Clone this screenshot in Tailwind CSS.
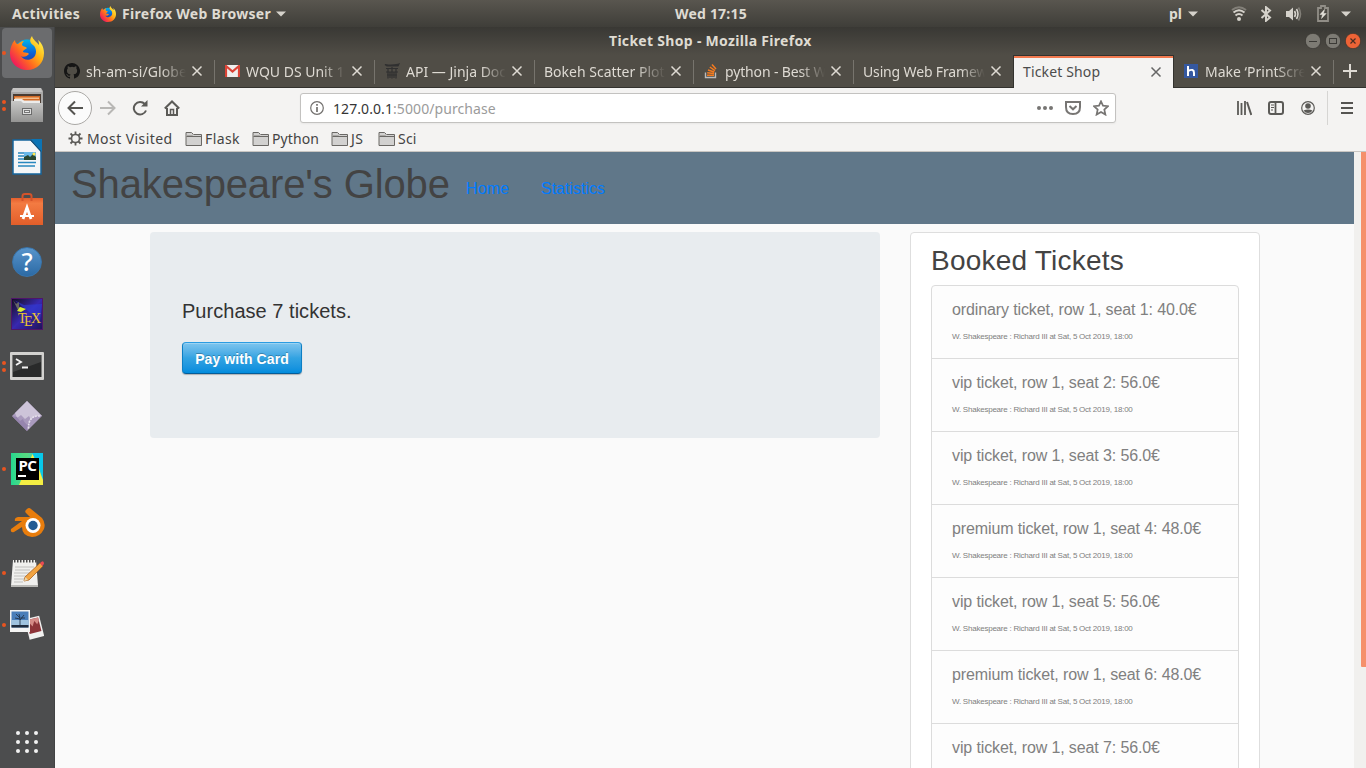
<!DOCTYPE html>
<html lang="en">
<head>
<meta charset="utf-8">
<title>Ticket Shop</title>
<script src="https://cdn.jsdelivr.net/npm/@tailwindcss/browser@4"></script>
</head>
<body class="w-[1366px] h-[768px] overflow-hidden flex flex-col bg-[#fafafa] font-['Noto_Sans',sans-serif] text-[14px]">
<svg class="absolute size-0">
  <defs>
    <linearGradient id="ffb" x1="0" y1="0" x2="0" y2="1"><stop offset="0" stop-color="#00b4ec"/><stop offset=".5" stop-color="#0a63d8"/><stop offset="1" stop-color="#332a8c"/></linearGradient>
    <linearGradient id="ffo" x1=".9" y1=".1" x2=".1" y2=".8"><stop offset="0" stop-color="#fff14a"/><stop offset=".35" stop-color="#ffb515"/><stop offset=".65" stop-color="#ff6a1f"/><stop offset="1" stop-color="#f01a5c"/></linearGradient>
    <symbol id="firefox" viewBox="0 0 34 34">
      <circle cx="17" cy="17" r="13.500" fill="url(#ffb)"/>
      <path d="M22 0C19 4 20 7 23 9C27 12 27 19 23 22C19 25 13 24 11 20C14 22 17 20 19 18C18 16 15 17 13 16C13 14 16 13 17 12C15 10 13 11 12 9C12 7 13 6 14 5C11 5 9 7 8 8C6 8 5 6 5 4C2 7 0 12 0 18C0 27 8 34 17 34C27 34 34 27 34 17C34 11 31 6 28 4C29 6 29 8 29 9C27 6 23 4 22 0Z" fill="url(#ffo)"/>
    </symbol>
    <symbol id="folder" viewBox="0 0 18 16"><path d="M1 14.5V1.5H6.5L8.5 3.5H16.500V14.500Z" fill="#d2d1d0" stroke="#6a6865"/><path d="M1.500 5.500H16.500" stroke="#6a6865"/><path d="M1.500 4.500H7L8.500 3.500" fill="none" stroke="#aaa8a5"/></symbol>
    <symbol id="close" viewBox="0 0 12 12"><path d="M1.500 1.500L10.500 10.500M10.500 1.500L1.500 10.500" stroke="currentColor" stroke-width="1.500"/></symbol>
    <symbol id="down" viewBox="0 0 10 6"><path d="M0 .5H10L5 5.500Z" fill="#d5d2cb"/></symbol>
  </defs>
</svg>

<!-- System panel -->
<header class="h-[27px] shrink-0 flex items-center bg-linear-to-b from-[#59564f] to-[#3f3e39] text-[#dfdbd2] font-bold pl-3 pr-[15px]">
  <span class="w-[88px] tracking-[0.3px] whitespace-nowrap">Activities</span>
  <svg class="size-[16px]"><use href="#firefox"/></svg>
  <span class="ml-[6px] w-[149px] tracking-[0.3px] whitespace-nowrap">Firefox Web Browser</span>
  <svg class="ml-[5px] w-[10px] h-[6px]"><use href="#down"/></svg>
  <span class="ml-[389px] w-[74px] tracking-[0.2px] whitespace-nowrap">Wed 17:15</span>
  <span class="ml-auto w-[19px]">pl</span>
  <svg class="w-[10px] h-[6px]"><use href="#down"/></svg>
  <svg class="ml-[33px] w-[16px] h-[16px]" viewBox="0 0 16 16" fill="none" stroke-width="2"><circle cx="8" cy="13" r="2" fill="#d5d2cb"/><path d="M4.500 9.500Q8 6.500 11.500 9.500" stroke="#d5d2cb"/><path d="M2.500 6.500Q8 2 13.500 6.500" stroke="#d5d2cb"/><path d="M1 4Q8-1.500 15 4" stroke="#827f78"/></svg>
  <svg class="ml-[12px] w-[14px] h-[16px]" viewBox="0 0 14 16" fill="none" stroke="#d5d2cb" stroke-width="2"><path d="M2.500 4L11 11.500L7 14.800V1.200L11 4.500L2.500 12"/></svg>
  <svg class="ml-[12px] w-[17px] h-[16px]" viewBox="0 0 17 16"><path d="M1 5H4L8 1.500V14.500L4 11H1Z" fill="#d5d2cb"/><path d="M9.500 5Q11.500 8 9.500 11M11.500 3Q14.500 8 11.500 13" stroke="#d5d2cb" stroke-width="1.600" fill="none"/><path d="M13.500 1.500Q17.500 8 13.500 14.500" stroke="#827f78" stroke-width="1.600" fill="none"/></svg>
  <svg class="ml-[15px] w-[12px] h-[17px]" viewBox="0 0 12 17"><path d="M1 3H4V1H8V3H11V16H1Z" fill="none" stroke="#918e87" stroke-width="1.800"/><path d="M7.500 4.500L3 9.500H5.500L4.500 13.500L9.200 8.500H6.500Z" fill="#e5e2da" stroke="#e5e2da" stroke-width=".5"/></svg>
  <svg class="ml-[12px] w-[10px] h-[6px]"><use href="#down"/></svg>
</header>

<div class="flex-1 flex min-h-0">
  <!-- Dock -->
  <aside class="w-[55px] shrink-0 bg-[#4c4d4e] border-r border-[#424344] flex flex-col">
    <div class="h-[52px] shrink-0 relative flex items-center justify-center"><div class="absolute left-[2px] top-[1px] size-[50px] rounded-[4px] bg-[#6b6c6e]"></div><i class="absolute left-[2px] top-[24px] size-[4px] rounded-full bg-[#e95420]"></i><svg class="relative size-[34px]"><use href="#firefox"/></svg></div>
    <div class="h-[52px] shrink-0 relative flex items-center justify-center"><i class="absolute left-[2px] top-[21px] size-[4px] rounded-full bg-[#e95420]"></i><i class="absolute left-[2px] top-[28px] size-[4px] rounded-full bg-[#e95420]"></i>
      <svg class="w-[32px] h-[34px]" viewBox="1 0 32 34"><linearGradient id="cab" x1="0" y1="0" x2="0" y2="1"><stop offset="0" stop-color="#c8c8c7"/><stop offset="1" stop-color="#949493"/></linearGradient><path d="M3 0H31L33 3V34H1V3Z" fill="#aaa9a8"/><path d="M3 0H31L32 4H2Z" fill="#c4c3c2"/><rect x="3" y="6" width="28" height="9" fill="#4b3c32"/><path d="M4 8H30V13H4Z" fill="#d46a25"/><path d="M5 9.500H29V11H5Z" fill="#f3bd8a"/><path d="M4 11H12L14 12.500H30V15H4Z" fill="#ececeb"/><path d="M1 13H11L13 15H33V34H1Z" fill="url(#cab)"/><rect x="12.500" y="20.500" width="9" height="6" fill="#ddd" stroke="#6b6b6b"/><rect x="14.500" y="22.500" width="5" height="2" fill="#e8e8e8" stroke="#777"/></svg></div>
    <div class="h-[52px] shrink-0 flex items-center justify-center">
      <svg class="w-[30px] h-[36px]" viewBox="0 0 30 36"><path d="M1 1H19L29 12V35H1Z" fill="#f5f6f7" stroke="#16659d" stroke-width="1.500"/><path d="M19 0H30V13Z" fill="#0b74b5"/><path d="M18 1L29 13V12L19 1Z" fill="#13466c"/><path d="M6 14H12M6 17H12M6 20H12M6 23.500H24M6 27H23" stroke="#2888bf" stroke-width="1.500"/><rect x="12" y="13" width="12" height="8" fill="#69b8e8"/><path d="M12 21V18L16 16L18 18L21 15L24 18V21Z" fill="#29472f"/><circle cx="22" cy="15" r="1.500" fill="#ffe94f"/></svg></div>
    <div class="h-[52px] shrink-0 flex items-center justify-center">
      <svg class="w-[32px] h-[34px]" viewBox="0 0 32 34"><linearGradient id="bag" x1="0" y1="0" x2="0" y2="1"><stop offset="0" stop-color="#e45f2d"/><stop offset=".2" stop-color="#f37b42"/><stop offset="1" stop-color="#e25e2a"/></linearGradient><path d="M0 6H32V33H0Z" fill="url(#bag)"/><path d="M11.500 9V4Q11.500 2 14 2H18Q20.500 2 20.500 4V9" fill="none" stroke="#d4532a" stroke-width="2"/><path d="M12 27L16 15.500L20 27" fill="none" stroke="#fff" stroke-width="2.800"/><path d="M9 24H23" stroke="#fff" stroke-width="2"/></svg></div>
    <div class="h-[52px] shrink-0 flex items-center justify-center pt-px"><div class="size-[30px] rounded-full bg-linear-to-b from-[#5794cb] to-[#2c6aa5] border border-[#3975ac] flex items-center justify-center text-white font-medium text-[25px] leading-none">?</div></div>
    <div class="h-[52px] shrink-0 flex items-center justify-center pt-px"><div class="relative w-[32px] h-[32px] bg-linear-to-br from-[#160c26] via-[#3828b0] to-[#20145c] border border-[#4f1569] text-[#ecc52f] font-['Liberation_Serif',serif] text-[14px] leading-[14px]"><svg class="absolute inset-0" width="30" height="30"><path d="M2 1L11 8L28 22L30 5L12 6Z" fill="#303cdb" opacity=".6"/><path d="M1 1L4 5L7 3V8L11 9L6 11Z" fill="#666"/><path d="M8 8L14 10L9 13L5 12Z" fill="#d9ef31"/></svg><span class="absolute left-[6px] top-[13px]">T</span><span class="absolute left-[12px] top-[16px]">E</span><span class="absolute left-[19px] top-[13px]">X</span></div></div>
    <div class="h-[52px] shrink-0 relative flex items-center justify-center pt-[2px]"><i class="absolute left-[2px] top-[22px] size-[4px] rounded-full bg-[#e95420]"></i><i class="absolute left-[2px] top-[29px] size-[4px] rounded-full bg-[#e95420]"></i>
      <svg class="w-[34px] h-[28px]" viewBox="0 0 34 28"><rect width="34" height="28" rx="1" fill="#d3d2d0"/><rect x="2.500" y="3" width="29" height="22" fill="#292a2a"/><path d="M3 3H31V10L3 20Z" fill="#424343"/><path d="M6 7L11 10L6 13M12 15.500H18" stroke="#f4f4f4" stroke-width="1.800" fill="none"/></svg></div>
    <div class="h-[52px] shrink-0 flex items-center justify-center pb-[2px]">
      <svg class="w-[30px] h-[30px]" viewBox="0 0 30 30"><path d="M15 0L30 15L15 30L0 15Z" fill="#a99abd"/><path d="M15 0L30 15Q23 14 19 19L17 15L13 18L9 14L5 17L3 12Z" fill="#cdc4d9"/><path d="M0 15L15 30L16 24Q12 22 11 18L8 20L5 16Z" fill="#9685ae"/><path d="M28 15Q16 14 16.500 28" fill="none" stroke="#e5e0ec" stroke-width="1.600" stroke-dasharray="2 1"/></svg></div>
    <div class="h-[52px] shrink-0 relative flex items-center justify-center"><i class="absolute left-[2px] top-[24px] size-[4px] rounded-full bg-[#e95420]"></i>
      <div class="relative size-[32px] bg-linear-to-r from-[#22d88f] via-[#58da80] to-[#06c4ee]"><svg class="absolute inset-0" width="32" height="32"><path d="M22 0L32 27V32H8Z" fill="#f4ee43"/><path d="M21 0H32V22Z" fill="#08c8ea"/></svg><div class="absolute left-[5px] top-[5px] w-[23px] h-[22px] bg-black text-white font-bold text-[15px] leading-[15px] text-center tracking-[-0.4px]">PC<i class="absolute left-[2px] bottom-[3px] w-[8px] h-[2px] bg-white"></i></div></div></div>
    <div class="h-[52px] shrink-0 flex items-center justify-center pt-[2px]">
      <svg class="w-[35px] h-[29px]" viewBox="0 0 35 29"><path d="M17 1Q19-1 21 1L32 10Q36 15 34 21Q30 29 22 29Q12 28 12 19L4 24Q0 25 1 21L12 13H5Q4 10 8 9H20L16 5Q14 3 17 1Z" fill="#e87d0d"/><circle cx="23" cy="17.500" r="7.500" fill="#fff"/><circle cx="23" cy="17.500" r="4.700" fill="#255c93"/></svg></div>
    <div class="h-[52px] shrink-0 relative flex items-center justify-center"><i class="absolute left-[2px] top-[24px] size-[4px] rounded-full bg-[#e95420]"></i>
      <svg class="w-[34px] h-[28px]" viewBox="0 0 34 28"><path d="M3 1H26L28 27H1Z" fill="#f0f0ee"/><path d="M1 26H28V28H1Z" fill="#b9b9b6"/><path d="M4 2H26" stroke="#4b4b4b" stroke-width="3" stroke-dasharray="1.500 1.500"/><path d="M5 8H24M5 11H20M4 14H22M4 17H17M4 20H15M4 23H13" stroke="#c0c0be"/><path d="M15 18L30 4L33 7L19 21L14 22Z" fill="#f2a441" stroke="#a95f1b" stroke-width=".8"/><path d="M30 4Q34 0 34 5L32 7Z" fill="#ed4b54"/><path d="M14 22L15.500 18L18 21Z" fill="#e8d5ad"/></svg></div>
    <div class="h-[52px] shrink-0 relative flex items-center justify-center"><i class="absolute left-[2px] top-[24px] size-[4px] rounded-full bg-[#e95420]"></i>
      <svg class="w-[34px] h-[32px]" viewBox="0 0 34 32"><g transform="rotate(-14 25 19)"><rect x="17" y="8" width="15" height="21" fill="#f1f1f0"/><rect x="18.500" y="9.500" width="12" height="14" fill="#8d3439"/><path d="M18.500 18L21 13L23 17L26 12L28 16L30.500 13V9.500H18.500Z" fill="#d48b87"/></g><rect x="0" y="1" width="20" height="22" fill="#f4f4f3"/><rect x="1.500" y="2.500" width="17" height="16" fill="#4a7eb9"/><path d="M1.500 11H18.500V16H1.500Z" fill="#9fc3df"/><path d="M1.500 16H18.500V18.500H1.500Z" fill="#1f2c3d"/><path d="M10 17V9L6 5M10 11L14 6M10 9L9 5M10 10L5 9M11 9L15 9" stroke="#1f2c3d" stroke-width=".8" fill="none"/></svg></div>
    <div class="mt-auto mb-[15px] self-center grid grid-cols-3 gap-[5px]">
      <i class="size-[4px] rounded-full bg-[#f2f2f2]"></i><i class="size-[4px] rounded-full bg-[#f2f2f2]"></i><i class="size-[4px] rounded-full bg-[#f2f2f2]"></i><i class="size-[4px] rounded-full bg-[#f2f2f2]"></i><i class="size-[4px] rounded-full bg-[#f2f2f2]"></i><i class="size-[4px] rounded-full bg-[#f2f2f2]"></i><i class="size-[4px] rounded-full bg-[#f2f2f2]"></i><i class="size-[4px] rounded-full bg-[#f2f2f2]"></i><i class="size-[4px] rounded-full bg-[#f2f2f2]"></i>
    </div>
  </aside>

  <!-- Browser window -->
  <section class="flex-1 min-w-0 flex flex-col">
    <div class="h-[28px] shrink-0 bg-linear-to-b from-[#393834] to-[#504d46] flex items-center pl-[554px] pr-[5px] text-[#dfdbd2] font-bold">
      <h1 class="whitespace-nowrap tracking-[0.3px] pb-[2px]">Ticket Shop - Mozilla Firefox</h1>
      <div class="ml-auto flex gap-[4px]">
        <svg class="size-[16px]" viewBox="0 0 16 16"><circle cx="8" cy="8" r="7.700" fill="#7d7b74" stroke="#33322e" stroke-width=".7"/><path d="M4 8.500H12" stroke="#3b3a36"/></svg>
        <svg class="size-[16px]" viewBox="0 0 16 16"><circle cx="8" cy="8" r="7.700" fill="#7d7b74" stroke="#33322e" stroke-width=".7"/><rect x="4.500" y="5.500" width="7" height="5" fill="none" stroke="#3b3a36"/></svg>
        <svg class="size-[16px]" viewBox="0 0 16 16"><circle cx="8" cy="8" r="7.700" fill="#ee6336" stroke="#33322e" stroke-width=".7"/><path d="M5.500 5.500L10.500 10.500M10.500 5.500L5.500 10.500" stroke="#4a2d22" stroke-width="1.200"/></svg>
      </div>
    </div>

    <!-- Tabs -->
    <div class="h-[33px] shrink-0 bg-[#504d46] flex border-b border-[#33322e] text-[#dedad3] whitespace-nowrap">
      <div class="w-[160px] flex items-center pl-[9px] relative"><svg class="size-[16px] shrink-0" viewBox="0 0 16 16"><path fill="#151515" d="M8 0C3.580 0 0 3.580 0 8c0 3.540 2.290 6.530 5.470 7.590.4.070.55-.17.55-.38v-1.490c-2.230.48-2.690-.95-2.690-.95-.36-.92-.89-1.170-.89-1.170-.73-.5.050-.49.050-.49.81.06 1.230.83 1.230.83.72 1.230 1.890.88 2.350.67.070-.52.28-.88.51-1.080-1.780-.2-3.640-.89-3.640-3.950 0-.87.31-1.590.82-2.150-.08-.2-.36-1.020.08-2.120 0 0 .67-.21 2.200.82a7.600 7.600 0 0 1 4 0c1.530-1.040 2.200-.82 2.200-.82.44 1.100.16 1.920.08 2.120.51.56.82 1.270.82 2.150 0 3.070-1.870 3.750-3.650 3.950.29.25.54.73.54 1.480v2.200c0 .21.15.46.55.38A8 8 0 0 0 8 0Z"/></svg><span class="ml-[6px] w-[100px] overflow-hidden tracking-[0.1px] mask-r-from-75%">sh-am-si/Globe</span><svg class="size-[12px] ml-[5px] shrink-0"><use href="#close"/></svg><i class="absolute right-0 top-[5px] h-[24px] w-px bg-[#77746d]"></i></div>
      <div class="w-[160px] flex items-center pl-[10px] relative"><svg class="w-[15px] h-[12px] shrink-0" viewBox="0 0 15 12"><rect width="15" height="12" rx="1" fill="#efefee"/><path d="M1 12V1L7.500 6.500L14 1V12" fill="none" stroke="#db4437" stroke-width="2.200"/></svg><span class="ml-[6px] w-[100px] overflow-hidden mask-r-from-75%">WQU DS Unit 1</span><svg class="size-[12px] ml-[5px] shrink-0"><use href="#close"/></svg><i class="absolute right-0 top-[5px] h-[24px] w-px bg-[#77746d]"></i></div>
      <div class="w-[160px] flex items-center pl-[9px] relative"><svg class="size-[16px] shrink-0" viewBox="0 0 16 16"><path d="M1 1.500Q8 3 15 1L14 3H3ZM2 5.500H14M4 6V15.500M12 6V15.500M8 4V15.500M2 9H14M3 12H13M6 9V15M10 9V15" stroke="#303030" fill="#303030" stroke-width="1.200"/></svg><span class="ml-[6px] w-[100px] overflow-hidden mask-r-from-75%">API — Jinja Doc</span><svg class="size-[12px] ml-[5px] shrink-0"><use href="#close"/></svg><i class="absolute right-0 top-[5px] h-[24px] w-px bg-[#77746d]"></i></div>
      <div class="w-[159px] flex items-center pl-[9px] relative"><span class="w-[122px] overflow-hidden mask-r-from-75%">Bokeh Scatter Plot</span><svg class="size-[12px] ml-[4px] shrink-0"><use href="#close"/></svg><i class="absolute right-0 top-[5px] h-[24px] w-px bg-[#77746d]"></i></div>
      <div class="w-[160px] flex items-center pl-[9px] relative"><svg class="size-[16px] shrink-0" viewBox="0 0 16 16" fill="none"><path d="M2.500 9.500V14.500H12.500V9.500" stroke="#bcbbbb" stroke-width="1.400"/><path d="M4 12.300H11M4.200 9.700L11 10.500M5 7L11.300 9M6.800 4L12 7.700M9 1.500L13 6" stroke="#f47b20" stroke-width="1.500"/></svg><span class="ml-[6px] w-[100px] overflow-hidden mask-r-from-75% tracking-[-0.15px]">python - Best W</span><svg class="size-[12px] ml-[5px] shrink-0"><use href="#close"/></svg><i class="absolute right-0 top-[5px] h-[24px] w-px bg-[#77746d]"></i></div>
      <div class="w-[159px] flex items-center pl-[9px] relative"><span class="w-[122px] overflow-hidden mask-r-from-80% tracking-[-0.15px]">Using Web Framew</span><svg class="size-[12px] ml-[5px] shrink-0"><use href="#close"/></svg></div>
      <div class="w-[161px] h-[33px] bg-[#f4f3f2] border-t border-x border-[#33322e] text-[#4c4c4c] flex flex-col"><i class="h-[2px] shrink-0 bg-[#f2794f]"></i><div class="h-[27px] flex items-center pl-[9px]"><span class="w-[127px] tracking-[0.15px]">Ticket Shop</span><svg class="size-[12px] shrink-0 text-[#666]"><use href="#close"/></svg></div></div>
      <div class="w-[160px] flex items-center pl-[10px] relative"><svg class="size-[14px] shrink-0" viewBox="0 0 14 14"><rect width="14" height="14" fill="#3558a0"/><path d="M4 2V12M4 7Q10 4 10 9V12" fill="none" stroke="#fff" stroke-width="2"/></svg><span class="ml-[7px] w-[100px] overflow-hidden mask-r-from-70%">Make ‘PrintScre</span><svg class="size-[12px] ml-[5px] shrink-0"><use href="#close"/></svg><i class="absolute right-0 top-[5px] h-[24px] w-px bg-[#77746d]"></i></div>
      <svg class="mt-[9px] ml-[9px] size-[14px] shrink-0" viewBox="0 0 14 14"><path d="M7 0V14M0 7H14" stroke="#dedad3" stroke-width="2"/></svg>
    </div>

    <!-- Navigation bar -->
    <div class="h-[40px] shrink-0 bg-[#f4f3f2] flex items-center pl-[3px] text-[#5b5a57]">
      <div class="size-[34px] shrink-0 rounded-full border border-[#aaa8a5] bg-[#fbfbfb] flex items-center justify-center"><svg class="size-[16px]" viewBox="0 0 16 16" fill="none" stroke="#555451" stroke-width="2"><path d="M16 8H1.500M8 1.500L1.500 8L8 14.500"/></svg></div>
      <svg class="ml-[8px] size-[16px] shrink-0" viewBox="0 0 16 16" fill="none" stroke="#b8b7b5" stroke-width="2"><path d="M0 8H14.500M8 1.500L14.500 8L8 14.500"/></svg>
      <svg class="ml-[16px] size-[16px] shrink-0" viewBox="0 0 16 16" fill="none" stroke="#5b5a57" stroke-width="2"><path d="M14 10.500A6.300 6.300 0 1 1 12.800 4"/><path d="M15.500 0V6.500H9Z" fill="#5b5a57" stroke="none"/></svg>
      <svg class="ml-[16px] size-[16px] shrink-0" viewBox="0 0 16 16" fill="none" stroke="#5b5a57" stroke-width="2"><path d="M.8 8.500L8 1.500L15.200 8.500M3 8V15H13V8"/><path d="M6.500 15V9.500H9.500V15" stroke-width="1.500"/></svg>
      <div class="ml-[120px] w-[816px] h-[30px] shrink-0 bg-white border border-[#c3c2c0] rounded-[3px] flex items-center pl-[9px] pr-[6px] shadow-xs">
        <svg class="size-[14px]" viewBox="0 0 14 14"><circle cx="7" cy="7" r="6.300" fill="none" stroke="#73716f" stroke-width="1.200"/><path d="M7 6V11M7 3V4.700" stroke="#73716f" stroke-width="1.700"/></svg>
        <span class="ml-[9px] text-[#353535] whitespace-nowrap tracking-[0.08px]">127.0.0.1<span class="text-[#9b9b9b]">:5000/purchase</span></span>
        <svg class="ml-auto w-[16px] h-[4px]" viewBox="0 0 16 4" fill="#777573"><circle cx="2" cy="2" r="2"/><circle cx="8" cy="2" r="2"/><circle cx="14" cy="2" r="2"/></svg>
        <svg class="ml-[12px] size-[16px]" viewBox="0 0 16 16" fill="none" stroke="#777573" stroke-width="2"><path d="M1 2H15V7Q15 14 8 14Q1 14 1 7Z"/><path d="M4.500 6L8 9.300L11.500 6"/></svg>
        <svg class="ml-[12px] size-[16px]" viewBox="0 0 16 16" fill="none" stroke="#777573" stroke-width="1.700"><path d="M8 1.300L10 5.700L15 6.200L11.300 9.500L12.400 14.600L8 12L3.600 14.600L4.700 9.500L1 6.200L6 5.700Z"/></svg>
      </div>
      <svg class="ml-[120px] w-[16px] h-[16px] shrink-0" viewBox="0 0 16 16" stroke="#5b5a57" stroke-width="2"><path d="M2 1V15M5.500 3V15M9 1V15" stroke-width="1.800"/><path d="M11 2L15.300 15"/></svg>
      <svg class="ml-[16px] w-[16px] h-[14px] shrink-0" viewBox="0 0 16 14" fill="none" stroke="#5b5a57"><rect x="1" y="1" width="14" height="12" rx="2" stroke-width="2"/><path d="M7.500 1V13" stroke-width="1.800"/><path d="M3 4H6M3 6.500H6M3 9H5"/></svg>
      <svg class="ml-[17px] size-[14px] shrink-0" viewBox="0 0 14 14" fill="#5b5a57"><circle cx="7" cy="7" r="6.300" fill="none" stroke="#5b5a57" stroke-width="1.200"/><circle cx="7" cy="5" r="2.800"/><path d="M2.500 9.500Q7 7.500 11.500 9.500Q10 12 7 12Q4 12 2.500 9.500Z"/></svg>
      <i class="ml-[12px] h-[34px] w-px bg-[#d6d5d3] shrink-0"></i>
      <svg class="ml-[13px] w-[12px] h-[12px] shrink-0" viewBox="0 0 12 12" stroke="#555451" stroke-width="2"><path d="M0 1H12M0 6H12M0 11H12"/></svg>
    </div>

    <!-- Bookmarks -->
    <div class="h-[24px] shrink-0 bg-[#f4f3f2] border-b border-[#c9c6c2] flex items-center pl-[13px] pb-[2px] text-[#444] whitespace-nowrap">
      <svg class="size-[15px] mr-[4px]" viewBox="0 0 15 15" fill="none" stroke="#5b5a57"><circle cx="7.500" cy="7.500" r="4" stroke-width="1.600"/><path d="M7.500 .5V3M7.500 12V14.500M.5 7.500H3M12 7.500H14.500M2.500 2.500L4.500 4.500M10.500 10.500L12.500 12.500M12.500 2.500L10.500 4.500M4.500 10.500L2.500 12.500" stroke-width="1.800"/></svg>
      <span class="w-[98px] tracking-[0.42px]">Most Visited</span>
      <svg class="w-[18px] h-[16px] mr-[2px]"><use href="#folder"/></svg><span class="w-[47px] tracking-[0.4px]">Flask</span>
      <svg class="w-[18px] h-[16px] mr-[2px]"><use href="#folder"/></svg><span class="w-[59px] tracking-[0.1px]">Python</span>
      <svg class="w-[18px] h-[16px] mr-[2px]"><use href="#folder"/></svg><span class="w-[27px] tracking-[0.5px]">JS</span>
      <svg class="w-[18px] h-[16px] mr-[2px]"><use href="#folder"/></svg><span class="tracking-[0.2px]">Sci</span>
    </div>

    <!-- Page -->
    <div class="flex-1 min-h-0 flex font-['Liberation_Sans',Arial,sans-serif]">
      <main class="w-[1299px] shrink-0 bg-[#fafafa] overflow-hidden">
        <nav class="h-[72px] bg-[#607789] pl-4 flex text-[16px] text-[#007bff]">
          <h2 class="text-[40px] leading-[48px] mt-[8px] w-[395px] whitespace-nowrap tracking-[-0.13px] text-[#434343]">Shakespeare's Globe</h2>
          <a class="mt-[25px] leading-[24px] w-[75px] tracking-[0.15px]">Home</a>
          <a class="mt-[25px] leading-[24px]">Statistics</a>
        </nav>
        <div class="flex items-start pt-[8px] pl-[95px]">
          <div class="w-[730px] h-[206px] rounded-[4px] bg-[#e8ecef] px-[32px] pt-[64px]">
            <p class="text-[20px] leading-[30px] tracking-[0.03px] text-[#333]">Purchase 7 tickets.</p>
            <button class="mt-[16px] block w-[120px] h-[32px] rounded-[4px] border border-[#0d7fc4] border-t-[#2a9ce2] border-b-[#045c98] bg-linear-to-b from-[#7dc5ee] via-[#32a3e2] to-[#008cdd] shadow-[0_1px_1px_rgba(0,0,0,0.25),inset_0_1px_0_rgba(255,255,255,0.25)] text-white text-[14px] font-bold leading-[28px] pt-[2px] tracking-[0.08px] [text-shadow:0_-1px_0_rgba(0,0,0,0.25)]">Pay with Card</button>
          </div>
          <div class="ml-[30px] w-[350px] rounded-[4px] border border-[#dedede] bg-white px-[20px] pt-[11px] h-[700px] text-[#808080]">
            <h3 class="text-[28px] leading-[33px] tracking-[0.22px] text-[#434343] mb-[8px]">Booked Tickets</h3>
            <ul class="rounded-t-[4px] border border-[#dcdcdc] bg-[#fdfdfd] divide-y divide-[#dcdcdc] text-[16px] leading-[24px] tracking-[-0.12px]">
              <li class="h-[73px] px-[20px] pt-[12px]"><p>ordinary ticket, row 1, seat 1: 40.0€</p><p class="text-[8px] leading-[12px] mt-[9px] tracking-[-0.23px]">W. Shakespeare : Richard III at Sat, 5 Oct 2019, 18:00</p></li>
              <li class="h-[73px] px-[20px] pt-[12px]"><p>vip ticket, row 1, seat 2: 56.0€</p><p class="text-[8px] leading-[12px] mt-[9px] tracking-[-0.23px]">W. Shakespeare : Richard III at Sat, 5 Oct 2019, 18:00</p></li>
              <li class="h-[73px] px-[20px] pt-[12px]"><p>vip ticket, row 1, seat 3: 56.0€</p><p class="text-[8px] leading-[12px] mt-[9px] tracking-[-0.23px]">W. Shakespeare : Richard III at Sat, 5 Oct 2019, 18:00</p></li>
              <li class="h-[73px] px-[20px] pt-[12px]"><p>premium ticket, row 1, seat 4: 48.0€</p><p class="text-[8px] leading-[12px] mt-[9px] tracking-[-0.23px]">W. Shakespeare : Richard III at Sat, 5 Oct 2019, 18:00</p></li>
              <li class="h-[73px] px-[20px] pt-[12px]"><p>vip ticket, row 1, seat 5: 56.0€</p><p class="text-[8px] leading-[12px] mt-[9px] tracking-[-0.23px]">W. Shakespeare : Richard III at Sat, 5 Oct 2019, 18:00</p></li>
              <li class="h-[73px] px-[20px] pt-[12px]"><p>premium ticket, row 1, seat 6: 48.0€</p><p class="text-[8px] leading-[12px] mt-[9px] tracking-[-0.23px]">W. Shakespeare : Richard III at Sat, 5 Oct 2019, 18:00</p></li>
              <li class="h-[73px] px-[20px] pt-[12px]"><p>vip ticket, row 1, seat 7: 56.0€</p></li>
            </ul>
          </div>
        </div>
      </main>
      <div class="flex-1 bg-[#f1f0ee] flex justify-end"><div class="w-[5px] h-[515px] bg-[#f5906b] rounded-bl-[1px]"></div></div>
    </div>
  </section>
</div>
</body>
</html>
